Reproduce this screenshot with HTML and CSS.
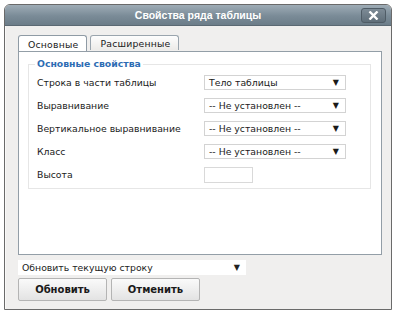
FILE: index.html
```html
<!DOCTYPE html>
<html lang="ru">
<head>
<meta charset="utf-8">
<title>Свойства ряда таблицы</title>
<link rel="stylesheet" href="styles.css">
</head>
<body>
<div class="window">
  <div class="titlebar">
    <span></span>
    <span class="title">Свойства ряда таблицы</span>
    <span class="close"><svg width="11" height="9" viewBox="0 0 11 9"><path d="M1.5 0.5 L9.5 8.5 M9.5 0.5 L1.5 8.5" stroke="#fff" stroke-width="2.4"/></svg></span>
  </div>
  <div class="content">
    <div class="tabs">
      <span class="tab active">Основные</span>
      <span class="tab">Расширенные</span>
    </div>
    <div class="panel">
      <div class="fieldset">
        <div class="legend">Основные свойства</div>
        <div class="rows">
          <div class="row"><span class="label">Строка в части таблицы</span><span class="select"><span>Тело таблицы</span><span class="arrow">▼</span></span></div>
          <div class="row"><span class="label">Выравнивание</span><span class="select"><span>-- Не установлен --</span><span class="arrow">▼</span></span></div>
          <div class="row"><span class="label">Вертикальное выравнивание</span><span class="select"><span>-- Не установлен --</span><span class="arrow">▼</span></span></div>
          <div class="row"><span class="label">Класс</span><span class="select"><span>-- Не установлен --</span><span class="arrow">▼</span></span></div>
          <div class="row"><span class="label">Высота</span><span class="input"></span></div>
        </div>
      </div>
    </div>
    <div class="action"><span>Обновить текущую строку</span><span class="arrow">▼</span></div>
    <div class="buttons">
      <span class="btn">Обновить</span>
      <span class="btn">Отменить</span>
    </div>
  </div>
</div>
</body>
</html>
```

FILE: styles.css
```css
html, body { margin: 0; padding: 0; background: #fff; }
body { font-family: "DejaVu Sans", Verdana, sans-serif; font-size: 9.3px; color: #1a1a1a; }

.window {
  margin: 4px 0 0 4px;
  width: 388px;
  height: 306px;
  box-sizing: border-box;
  border: 1px solid #6a6a6a;
  border-radius: 6px 6px 0 0;
  background: #f0efee;
  display: flex;
  flex-direction: column;
  overflow: hidden;
}

.titlebar {
  height: 20px;
  flex: none;
  display: grid;
  grid-template-columns: 1fr auto 1fr;
  align-items: center;
  background: linear-gradient(#9eacb6, #7a8b97 55%, #6c7d89);
  border-bottom: 1px solid #5b6973;
}
.title {
  font-family: "Liberation Sans", Arial, sans-serif;
  font-weight: bold;
  font-size: 10.5px;
  color: #fff;
}
.close {
  justify-self: end;
  margin-right: 5px;
  margin-top: 1px;
  width: 25px;
  height: 15px;
  box-sizing: border-box;
  border: 1px solid #4f5c66;
  border-radius: 3px;
  background: linear-gradient(#7d8b96, #5f6e79);
  display: flex;
  align-items: center;
  justify-content: center;
}

.content {
  flex: 1;
  padding: 8px 9px 0 12px;
  border-left: 1px solid #faf9f8;
  display: flex;
  flex-direction: column;
}

.tabs { display: flex; align-items: flex-end; gap: 3px; height: 17px; }
.tab {
  height: 15px;
  box-sizing: border-box;
  padding: 1px 8px 0 9px;
  border: 1px solid #9aa5ae;
  border-bottom: none;
  border-radius: 3px 3px 0 0;
  background: linear-gradient(#fdfdfd, #ecebe8);
  line-height: 14px;
  margin-bottom: 1px;
  font-size: 9.3px;
  letter-spacing: 0.2px;
}
.tab.active {
  height: 17px;
  margin-bottom: -1px;
  background: #fff;
  border-color: #8f9ba5;
  padding-top: 2px;
}

.panel {
  height: 204px;
  box-sizing: border-box;
  border: 1px solid #939ea7;
  background: #fff;
  padding: 6px 10px 0 9px;
}

.fieldset {
  border: 1px solid #e6e6e6;
  height: 125px;
  box-sizing: border-box;
  margin-top: 6px;
  padding: 0 0 0 8px;
}
.legend {
  display: inline-block;
  margin: -7px 0 0 -2px;
  padding: 0 2px;
  background: #fff;
  color: #2d6cb3;
  font-weight: bold;
  font-size: 9.3px;
  line-height: 12px;
  vertical-align: top;
}
.rows { display: flex; flex-direction: column; gap: 8px; margin-top: -1px; }
.row { display: flex; align-items: center; height: 15px; }
.label { width: 167px; }
.select {
  width: 142px;
  height: 15px;
  box-sizing: border-box;
  border: 1px solid #d3d3d3;
  display: flex;
  align-items: center;
  justify-content: space-between;
  padding: 0 6px 0 4px;
  line-height: 13px;
}
.arrow { font-size: 8px; }
.input {
  width: 49px;
  height: 16px;
  margin-top: 1px;
  box-sizing: border-box;
  border: 1px solid #d9d9d9;
}

.action {
  margin-top: 5px;
  width: 228px;
  height: 15px;
  box-sizing: border-box;
  background: #fff;
  display: flex;
  align-items: center;
  justify-content: space-between;
  padding: 0 6px 0 4px;
  color: #222;
}

.buttons { display: flex; gap: 4px; margin-top: 3px; }
.btn {
  width: 89px;
  height: 23px;
  box-sizing: border-box;
  border: 1px solid #b4b4b4;
  border-radius: 2px;
  background: linear-gradient(#fafafa, #e3e3e3);
  display: flex;
  align-items: center;
  justify-content: center;
  font-weight: bold;
  font-size: 10px;
}
```
